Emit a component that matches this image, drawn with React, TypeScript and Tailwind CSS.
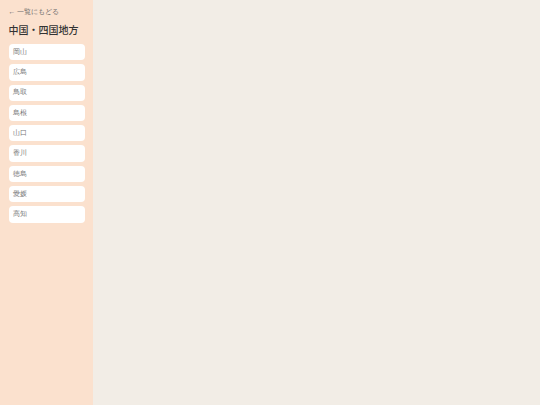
import React from "react";

const prefs = ["岡山", "広島", "鳥取", "島根", "山口", "香川", "徳島", "愛媛", "高知"];

export default function App() {
  return (
    <div
      className="flex h-[405px] w-[540px] bg-[#f2ede6]"
      style={{ fontFamily: '"Noto Sans CJK JP", "Noto Sans", sans-serif' }}
    >
      <aside className="flex w-[93px] flex-col bg-[#fbe1ce] px-[8.5px] pt-[7px]">
        <div className="flex items-center gap-[1px] text-[7px] leading-[10px] text-[#6b6b6b] [font-family:serif]">
          <span>←</span>
          <span>一覧にもどる</span>
        </div>
        <h1 className="mt-[6px] text-[10px] font-medium leading-[14px] text-[#333]">中国・四国地方</h1>
        <ul className="mt-[7px] flex flex-col gap-[4px]">
          {prefs.map((p) => (
            <li
              key={p}
              className="flex h-[16.3px] items-center rounded-[4px] bg-white px-[4.5px] text-[7px] text-[#777] [font-family:serif]"
            >
              {p}
            </li>
          ))}
        </ul>
      </aside>
      <main className="flex-1" />
    </div>
  );
}
